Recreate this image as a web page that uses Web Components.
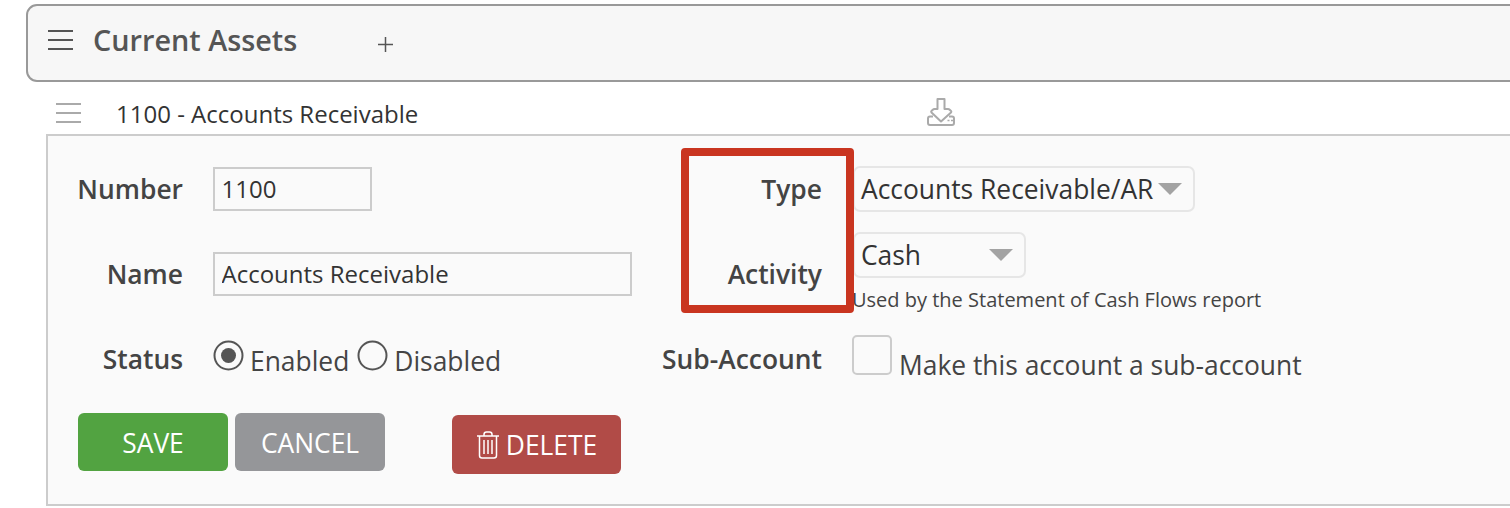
<!DOCTYPE html>
<html>
<head>
<meta charset="utf-8">
<title>Current Assets</title>
<style>
  html, body { margin: 0; height: 508px; overflow: hidden; background: #fff; }
  body { font-family: "Open Sans", "Liberation Sans", sans-serif; color: #444; }
</style>
</head>
<body>
<asset-group title-text="Current Assets">
  <account-row text="1100 - Accounts Receivable"></account-row>
  <account-form></account-form>
</asset-group>

<script>
const HAMBURGER = `<svg width="26" height="22" viewBox="0 0 26 22" fill="none" stroke="currentColor" stroke-width="2"><path d="M0 2h25M0 11h25M0 20h25"/></svg>`;

class AssetGroup extends HTMLElement {
  constructor() {
    super();
    this.attachShadow({ mode: "open" });
  }
  connectedCallback() {
    this.shadowRoot.innerHTML = `
      <style>
        :host { display: block; padding-top: 4px; }
        .bar {
          display: flex;
          align-items: center;
          box-sizing: border-box;
          height: 78px;
          margin: 0 -20px 0 26px;
          padding: 0 0 6px 20px;
          background: #f7f7f7;
          border: 2px solid #999;
          border-radius: 11px;
          color: #555;
        }
        .menu { display: flex; color: #555; }
        h1 { margin: 0 0 0 19px; font-size: 28.800px; font-weight: 600; line-height: 38px; width: 285px; }
        svg.plus { margin-top: 8px; }
      </style>
      <div class="bar">
        <span class="menu">${HAMBURGER}</span>
        <h1>${this.getAttribute("title-text")}</h1>
        <svg class="plus" width="15" height="15" viewBox="0 0 15 15" stroke="#555" stroke-width="1.500"><path d="M7.500 0v15M0 7.500h15"/></svg>
      </div>
      <slot></slot>
    `;
  }
}

class AccountRow extends HTMLElement {
  constructor() {
    super();
    this.attachShadow({ mode: "open" });
  }
  connectedCallback() {
    this.shadowRoot.innerHTML = `
      <style>
        :host { display: flex; align-items: center; box-sizing: border-box; height: 52px; padding: 10px 0 0 56px; color: #333; }
        .menu { display: flex; color: #aaa; margin-top: -1px; }
        span.text { margin: 2px 0 0 34px; width: 811px; font-size: 24px; line-height: 32px; }
      </style>
      <span class="menu">${HAMBURGER}</span>
      <span class="text">${this.getAttribute("text")}</span>
      <svg width="30" height="30" viewBox="0 0 30 30" fill="none" stroke="#aaa" stroke-width="2" stroke-linejoin="round">
        <path d="M10.500 1h7v10h3.500q1 0 1.700.7l1.300 1.300q.7.8 0 1.500L14 23.500 4.500 14.500q-.7-.7 0-1.500l1.300-1.300q.7-.7 1.700-.7h3z"/>
        <path d="M6 18.500H3q-2 0-2 2V25q0 2 2 2h22q2 0 2-2v-4.500q0-2-2-2h-3"/>
        <path d="M20.500 22.500h2M24 22.500h2" stroke-width="1.500"/>
      </svg>
    `;
  }
}

class SelectBox extends HTMLElement {
  constructor() {
    super();
    this.attachShadow({ mode: "open" });
  }
  connectedCallback() {
    this.shadowRoot.innerHTML = `
      <style>
        :host { display: flex; align-items: center; justify-content: space-between; box-sizing: border-box;
          width: var(--w); height: 46px; padding: 0 11px 0 6px; background: #fafafa;
          border: 2px solid #e6e6e6; border-radius: 7px; font-size: 26.400px; color: #333; white-space: nowrap; }
        i { width: 0; height: 0; border: 12px solid transparent; border-top: 12px solid #a3a3a3; border-bottom: 0; margin-top: -1px; }
      </style>
      <slot></slot><i></i>
    `;
  }
}

class RadioOption extends HTMLElement {
  constructor() {
    super();
    this.attachShadow({ mode: "open" });
  }
  connectedCallback() {
    const on = this.hasAttribute("checked");
    this.shadowRoot.innerHTML = `
      <style>
        :host { display: inline-flex; align-items: flex-start; font-size: 26.400px; color: #444; line-height: 32px; }
        svg { margin-right: 6px; }
        span { margin-top: 5px; }
      </style>
      <svg width="31" height="31" viewBox="0 0 31 31">
        <circle cx="15.500" cy="15.500" r="14" fill="#fafafa" stroke="#555" stroke-width="2"/>
        ${on ? '<circle cx="15.500" cy="15.500" r="7.500" fill="#555"/>' : ""}
      </svg>
      <span><slot></slot></span>
    `;
  }
}

class ActionButton extends HTMLElement {
  constructor() {
    super();
    this.attachShadow({ mode: "open" });
  }
  connectedCallback() {
    this.shadowRoot.innerHTML = `
      <style>
        :host { display: inline-flex; align-items: center; justify-content: center; gap: 6px; box-sizing: border-box;
          width: var(--w, 150px); height: var(--h, 58px); padding-top: 1px; border-radius: 6px; background: var(--bg);
          color: #fff; font-size: 26.400px; }
      </style>
      <slot></slot>
    `;
  }
}

class AccountForm extends HTMLElement {
  constructor() {
    super();
    this.attachShadow({ mode: "open" });
  }
  connectedCallback() {
    this.shadowRoot.innerHTML = `
      <style>
        :host { display: block; position: relative; box-sizing: border-box; height: 372px; margin: 0 -20px 0 46px;
          padding-top: 11px; background: #fafafa; border: 2px solid #ccc; }
        .grid { display: grid; grid-template-columns: 135px 419px 161px 1fr; grid-template-rows: repeat(3, 85px); column-gap: 30px; }
        label { justify-self: end; font-size: 26.400px; font-weight: 600; color: #444; line-height: 32px; margin-top: 26px; white-space: nowrap; }
        label.right { margin-right: 1px; }
        .cell { min-width: 0; }
        input { display: block; box-sizing: border-box; height: 44px; padding: 0 6.500px 2px; margin: 0;
          font: 24px "Open Sans", sans-serif; color: #333; background: #fafafa; border: 2px solid #ccc; border-radius: 0; outline: 0; }
        .radios { display: flex; align-self: start; gap: 8px; padding-top: 23px; }
        .help { font-size: 20px; line-height: 26px; color: #444; margin: 9px 0 0 -1px; white-space: nowrap; }
        .check { display: flex; align-self: start; align-items: flex-end; gap: 7px; padding-top: 18px; font-size: 26.400px; color: #444; white-space: nowrap; margin-left: -1px; }
        .check i { box-sizing: border-box; display: block; width: 40px; height: 40px; border: 2px solid #ccc; border-radius: 5px; background: #fafafa; }
        .check span { line-height: 32px; margin-bottom: -6px; }
        .actions { display: flex; align-items: flex-start; gap: 7px; padding: 11px 0 0 30px; }
        .delete { margin: 2px 0 0 60px; }
        .mark { position: absolute; left: 633px; top: 12px; box-sizing: border-box; width: 173px; height: 165px;
          border: 8px solid #c93520; border-radius: 4px; pointer-events: none; }
      </style>
      <div class="grid">
        <label>Number</label>
        <div class="cell" style="padding-top:20px"><input value="1100" style="width:159px"></div>
        <label class="right">Type</label>
        <div class="cell" style="padding-top:19px"><select-box style="--w:342px">Accounts Receivable/AR</select-box></div>

        <label>Name</label>
        <div class="cell" style="padding-top:20px"><input value="Accounts Receivable" style="width:419px"></div>
        <label class="right">Activity</label>
        <div class="cell">
          <select-box style="--w:173px">Cash</select-box>
          <div class="help">Used by the Statement of Cash Flows report</div>
        </div>

        <label>Status</label>
        <div class="radios">
          <radio-option checked>Enabled</radio-option>
          <radio-option>Disabled</radio-option>
        </div>
        <label class="right">Sub-Account</label>
        <div class="check"><i></i><span>Make this account a sub-account</span></div>
      </div>
      <div class="actions">
        <action-button style="--bg:#52a341">SAVE</action-button>
        <action-button style="--bg:#959699">CANCEL</action-button>
        <action-button class="delete" style="--bg:#b14b47;--w:169px;--h:59px">
          <svg width="24" height="28" viewBox="0 0 24 28" fill="none" stroke="#fff" stroke-width="1.500">
            <path d="M1 5h22M8 5V3.500Q8 1 10.500 1h3Q16 1 16 3.500V5M3.500 5v19.500Q3.500 27 6 27h12q2.500 0 2.500-2.500V5M8 9v14M12 9v14M16 9v14"/>
          </svg>DELETE</action-button>
      </div>
      <div class="mark"></div>
    `;
  }
}

customElements.define("asset-group", AssetGroup);
customElements.define("account-row", AccountRow);
customElements.define("select-box", SelectBox);
customElements.define("radio-option", RadioOption);
customElements.define("action-button", ActionButton);
customElements.define("account-form", AccountForm);
</script>
</body>
</html>
